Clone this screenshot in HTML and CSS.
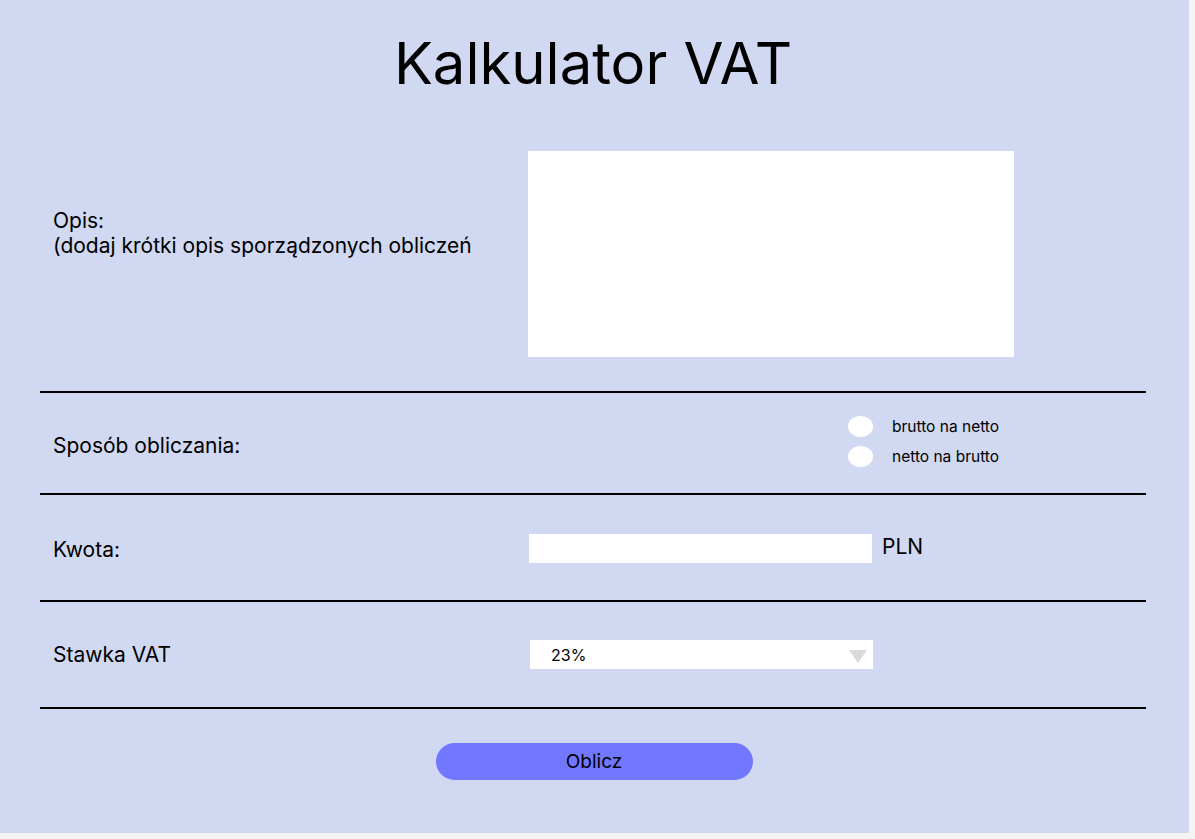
FILE: index.html
```html
<!DOCTYPE html>
<html lang="pl">
<head>
<meta charset="utf-8">
<title>Kalkulator VAT</title>
<link rel="stylesheet" href="styles.css">
</head>
<body>
<main class="panel">
  <h1 class="title">Kalkulator VAT</h1>

  <section class="row row-opis">
    <div class="label label-opis">Opis:<br>(dodaj krótki opis sporządzonych obliczeń</div>
    <div class="control"><textarea class="textarea"></textarea></div>
  </section>

  <section class="row row-sposob">
    <div class="label">Sposób obliczania:</div>
    <div class="control radios">
      <label class="radio"><input type="radio" name="mode" class="dot"><span>brutto na netto</span></label>
      <label class="radio"><input type="radio" name="mode" class="dot"><span>netto na brutto</span></label>
    </div>
  </section>

  <section class="row row-kwota">
    <div class="label">Kwota:</div>
    <div class="control amount">
      <input type="text" class="input">
      <span class="unit">PLN</span>
    </div>
  </section>

  <section class="row row-stawka">
    <div class="label">Stawka VAT</div>
    <div class="control">
      <div class="select-wrap">
        <select class="select"><option>23%</option><option>8%</option><option>5%</option><option>0%</option></select>
        <svg class="caret" width="18" height="13" viewBox="0 0 18 13"><polygon points="0,0 18,0 9,13" fill="#D9D9D9"/></svg>
      </div>
    </div>
  </section>

  <div class="actions"><button class="btn" type="button">Oblicz</button></div>
</main>
</body>
</html>
```

FILE: styles.css
```css
html, body {
  margin: 0;
  padding: 0;
  background: #F3F3F3;
}
body {
  font-family: Inter, "Noto Sans", sans-serif;
  color: #000;
}
.panel {
  width: 1189px;
  height: 833px;
  background: #D1D8F1;
  box-sizing: border-box;
  padding: 0 43px 0 40px;
}
.title {
  margin: 0;
  padding-top: 28px;
  font-size: 58px;
  line-height: 70px;
  font-weight: 400;
  text-align: center;
}
.row {
  display: grid;
  grid-template-columns: 488px 1fr;
  align-items: center;
  border-bottom: 2px solid #000;
}
.label {
  padding-left: 13px;
  font-size: 21px;
  line-height: 25px;
}
.row-opis {
  padding-top: 53px;
  padding-bottom: 34px;
  align-items: start;
}
.label-opis {
  padding-top: 57px;
}
.textarea {
  display: block;
  width: 486px;
  height: 206px;
  border: none;
  background: #fff;
  resize: none;
  margin: 0;
  padding: 0;
  outline: none;
}
.row-sposob { height: 100px; }
.row-sposob .label { padding-top: 4px; }
.radios {
  display: flex;
  flex-direction: column;
  gap: 9px;
  padding-left: 320px;
  margin-top: -3px;
}
.radio {
  display: flex;
  align-items: center;
  gap: 19px;
  font-size: 15.5px;
  line-height: 21px;
}
.dot {
  appearance: none;
  -webkit-appearance: none;
  width: 25px;
  height: 21px;
  margin: 0;
  border-radius: 50%;
  background: #fff;
  border: none;
}
.row-kwota { height: 105px; }
.row-kwota .label { padding-top: 4px; }
.amount {
  display: flex;
  align-items: center;
  gap: 10px;
  padding-left: 1px;
  padding-top: 1px;
}
.input {
  width: 343px;
  height: 29px;
  border: none;
  margin: 0;
  padding: 0;
  background: #fff;
  box-sizing: border-box;
  outline: none;
}
.unit {
  font-size: 21px;
  line-height: 25px;
  margin-top: -3px;
}
.row-stawka { height: 105px; }
.select-wrap {
  position: relative;
  width: 343px;
  height: 29px;
  margin-left: 2px;
}
.select {
  appearance: none;
  -webkit-appearance: none;
  width: 100%;
  height: 100%;
  border: none;
  border-radius: 0;
  background: #fff;
  padding: 0 0 0 21px;
  font-family: Inter, "Noto Sans", sans-serif;
  font-size: 16px;
  color: #000;
  outline: none;
}
.caret {
  position: absolute;
  right: 6px;
  top: 10px;
  pointer-events: none;
}
.actions {
  display: flex;
  justify-content: center;
  padding-top: 34px;
  padding-left: 2px;
}
.btn {
  width: 317px;
  height: 37px;
  border: none;
  border-radius: 19px;
  background: #7177FF;
  font-family: Inter, "Noto Sans", sans-serif;
  font-size: 19px;
  color: #000;
  padding: 0;
}
```
